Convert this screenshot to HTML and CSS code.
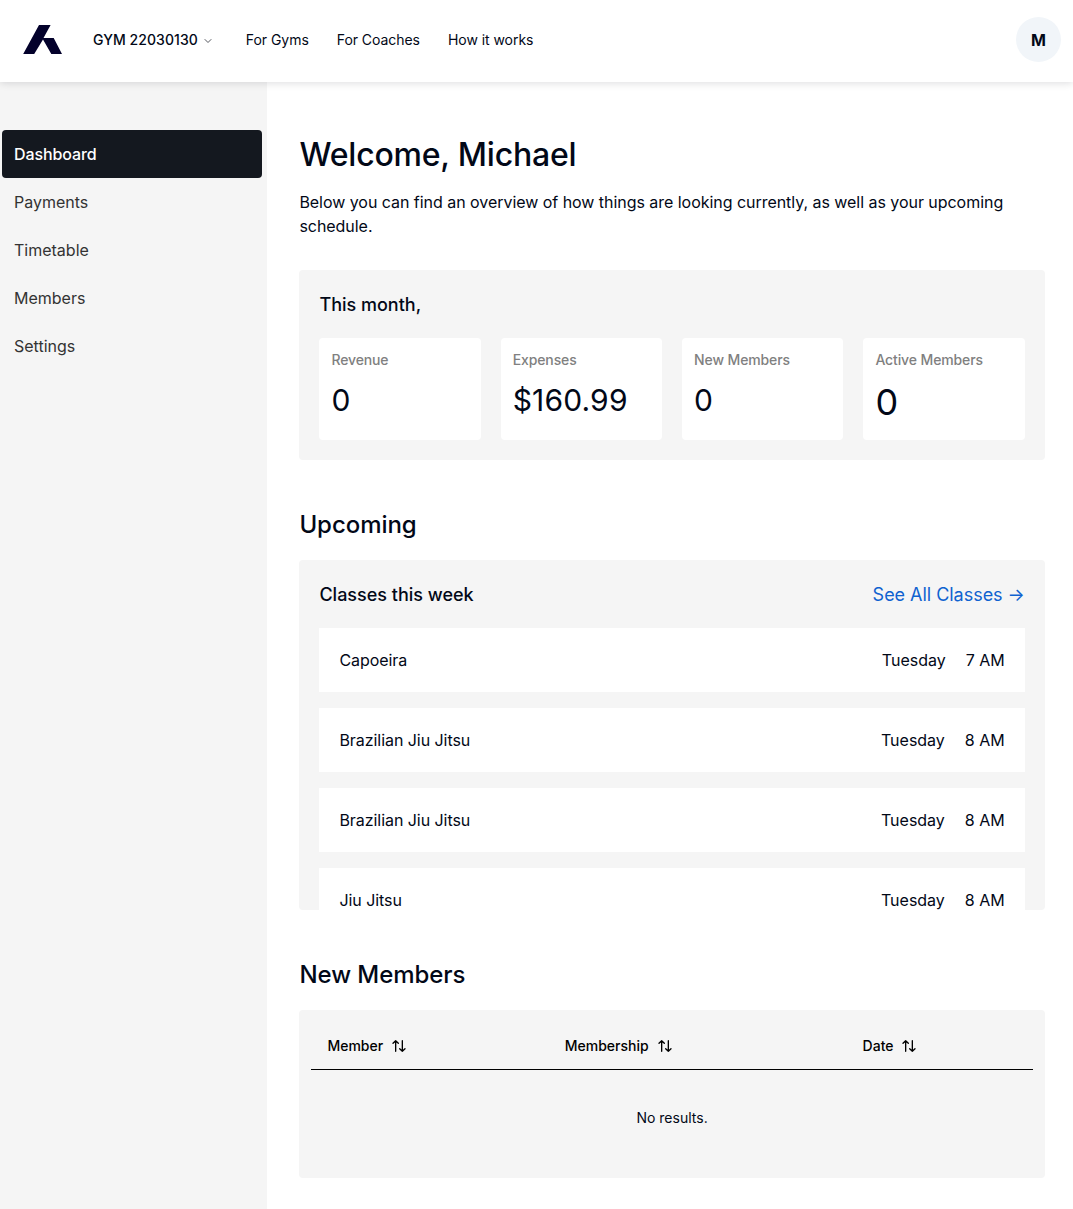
FILE: index.html
```html
<!DOCTYPE html>
<html lang="en">
<head>
<meta charset="utf-8">
<title>Dashboard</title>
<link rel="stylesheet" href="styles.css">
</head>
<body>
<svg class="sprite" aria-hidden="true">
  <symbol id="sort" viewBox="0 0 24 24"><path d="m21 16-4 4-4-4M17 20V4M3 8l4-4 4 4M7 4v16"/></symbol>
</svg>
<header class="topbar">
  <svg class="logo" viewBox="0 0 39 29"><path d="M16 0H27.6L20.5 13H30.7L39 29H28.3L20 14.4 11.2 29H.2Z"/></svg>
  <nav class="topnav">
    <a class="gym"><span>GYM 22030130</span><svg class="chevron" viewBox="0 0 24 24"><path d="m6 9 6 6 6-6"/></svg></a>
    <a class="toplink">For Gyms</a>
    <a class="toplink">For Coaches</a>
    <a class="toplink">How it works</a>
  </nav>
  <div class="avatar">M</div>
</header>
<div class="layout">
  <aside class="sidebar">
    <a class="side-item active">Dashboard</a>
    <a class="side-item">Payments</a>
    <a class="side-item">Timetable</a>
    <a class="side-item">Members</a>
    <a class="side-item">Settings</a>
  </aside>
  <main class="main">
    <h1 class="title">Welcome, Michael</h1>
    <p class="intro">Below you can find an overview of how things are looking currently, as well as your upcoming schedule.</p>
    <section class="panel">
      <h3 class="panel-title">This month,</h3>
      <div class="stats">
        <div class="stat"><div class="stat-label">Revenue</div><div class="stat-value">0</div></div>
        <div class="stat"><div class="stat-label">Expenses</div><div class="stat-value">$160.99</div></div>
        <div class="stat"><div class="stat-label">New Members</div><div class="stat-value">0</div></div>
        <div class="stat"><div class="stat-label">Active Members</div><div class="stat-value large">0</div></div>
      </div>
    </section>
    <h2 class="heading">Upcoming</h2>
    <section class="panel schedule">
      <div class="panel-head">
        <h3 class="panel-title">Classes this week</h3>
        <a class="see-all">See All Classes →</a>
      </div>
      <div class="classes">
        <div class="class-row"><span class="class-name">Capoeira</span><span>Tuesday</span><span>7 AM</span></div>
        <div class="class-row"><span class="class-name">Brazilian Jiu Jitsu</span><span>Tuesday</span><span>8 AM</span></div>
        <div class="class-row"><span class="class-name">Brazilian Jiu Jitsu</span><span>Tuesday</span><span>8 AM</span></div>
        <div class="class-row"><span class="class-name">Jiu Jitsu</span><span>Tuesday</span><span>8 AM</span></div>
      </div>
    </section>
    <h2 class="heading">New Members</h2>
    <section class="members">
      <div class="members-head">
        <div class="col">Member<svg class="sort"><use href="#sort"/></svg></div>
        <div class="col">Membership<svg class="sort"><use href="#sort"/></svg></div>
        <div class="col">Date<svg class="sort"><use href="#sort"/></svg></div>
      </div>
      <div class="empty">No results.</div>
    </section>
  </main>
</div>
</body>
</html>
```
FILE: styles.css
```css
* { box-sizing: border-box; margin: 0; }
body {
  font: 400 16px/24px Inter, "Liberation Sans", sans-serif;
  color: #020817;
  background: #fff;
}
.sprite { display: none; }
.topbar {
  position: relative;
  z-index: 1;
  display: flex;
  align-items: center;
  height: 82px;
  padding: 0 12px 3px 23px;
  background: #fff;
  box-shadow: 0 1px 8px rgba(2, 8, 23, .14);
}
.logo { width: 39px; height: 29px; fill: #03012b; }
.topnav {
  display: flex;
  align-items: center;
  flex: 1;
  gap: 28px;
  margin: 1px 0 0 31px;
  font-size: 14px;
  line-height: 20px;
}
.gym {
  display: flex;
  align-items: center;
  margin-right: 4px;
  font-weight: 500;
  letter-spacing: .06px;
}
.toplink { letter-spacing: -.05px; }
.chevron {
  width: 12px;
  height: 12px;
  margin: 2px 0 0 4px;
  fill: none;
  stroke: #55585f;
  stroke-width: 2;
  stroke-linecap: round;
  stroke-linejoin: round;
}
.avatar {
  width: 45px;
  height: 45px;
  border-radius: 50%;
  background: #f1f5f9;
  font-weight: 700;
  line-height: 47px;
  text-align: center;
}
.layout { display: flex; min-height: 1127px; }
.sidebar { width: 267px; padding: 48px 5px 0 2px; background: #f5f5f5; }
.side-item {
  display: block;
  height: 48px;
  padding: 12px;
  border-radius: 4px;
  color: #333;
}
.active { background: #14181f; color: #fff; font-weight: 500; letter-spacing: -.1px; }
.main { flex: 1; padding: 53px 28.25px 0 32.4px; }
.title { font-size: 32px; line-height: 40px; font-weight: 500; letter-spacing: -.2px; }
.intro { margin: 15px 0 32px; letter-spacing: -.04px; }
.panel { padding: 20px; border-radius: 4px; background: #f5f5f5; }
.panel-title { padding-top: 1px; font-size: 18px; line-height: 27px; font-weight: 500; }
.stats {
  display: grid;
  grid-template-columns: repeat(4, 1fr);
  gap: 20px;
  margin-top: 20px;
}
.stat { height: 102px; padding: 12px; border-radius: 4px; background: #fff; }
.stat-label {
  font-size: 14px;
  line-height: 20px;
  font-weight: 500;
  letter-spacing: -.12px;
  color: #808080;
}
.stat-value { margin-top: 10px; font-size: 30px; line-height: 40px; letter-spacing: .15px; }
.large { font-size: 36px; line-height: 44px; }
.heading {
  margin: 49px 0 19px;
  font-size: 24px;
  line-height: 32px;
  font-weight: 500;
  letter-spacing: -.05px;
}
.schedule { height: 350px; overflow: hidden; }
.panel-head { display: flex; justify-content: space-between; }
.see-all { padding-top: 1px; font-size: 18px; line-height: 27px; letter-spacing: -.03px; color: #0f62d0; }
.classes { display: flex; flex-direction: column; gap: 16px; margin-top: 20px; }
.class-row { display: flex; gap: 20px; padding: 20px; background: #fff; }
.class-name { flex: 1; letter-spacing: -.05px; }
.members {
  height: 168px;
  padding: 12px;
  border-radius: 4px;
  background: #f5f5f5;
  font-size: 14px;
  line-height: 20px;
}
.members-head {
  display: grid;
  grid-template-columns: 237.4px 297.8px 1fr;
  height: 48px;
  border-bottom: 1px solid #000;
  color: #000;
  font-weight: 500;
}
.col { display: flex; align-items: center; padding: 0 16px; }
.sort {
  width: 16px;
  height: 16px;
  margin-left: 8px;
  fill: none;
  stroke: #000;
  stroke-width: 2;
  stroke-linecap: round;
  stroke-linejoin: round;
}
.empty { padding: 38px 16px; text-align: center; }
```
